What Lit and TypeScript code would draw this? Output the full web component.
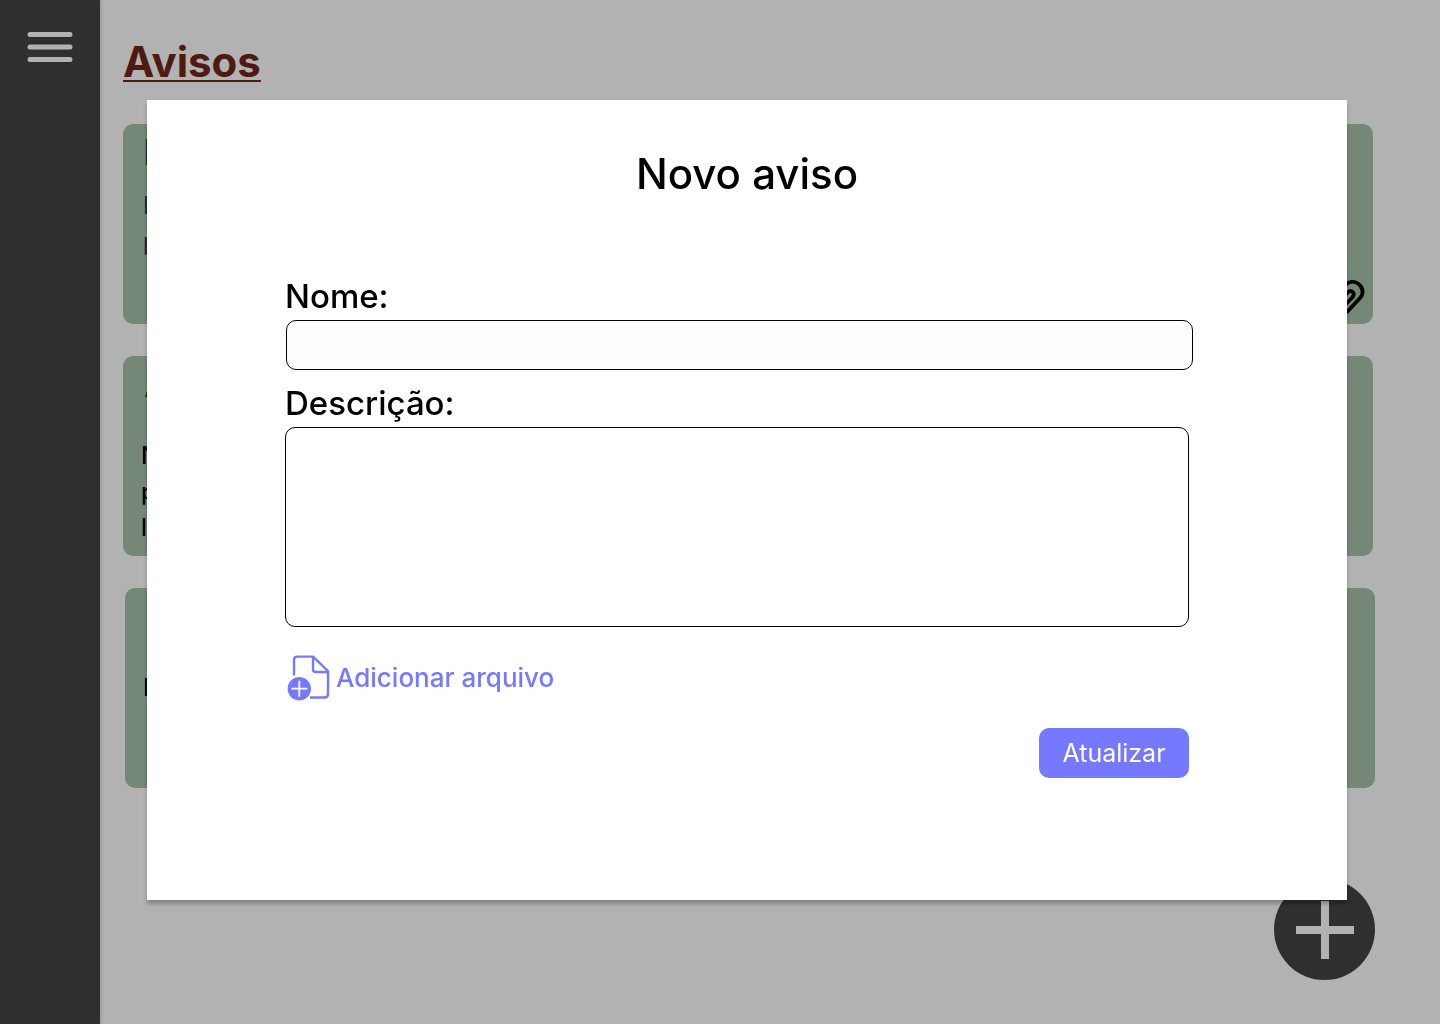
import { LitElement, html, css, svg } from "lit";
import { customElement } from "lit/decorators.js";
import { classMap } from "lit/directives/class-map.js";

interface Notice {
  title: string;
  lines: string[];
  variant: "tight" | "loose" | "plain";
  attachment: boolean;
}

const NOTICES: Notice[] = [
  { title: "N", lines: ["N", "p"], variant: "tight", attachment: true },
  { title: "A", lines: ["N", "p", "l"], variant: "loose", attachment: false },
  { title: "", lines: ["N"], variant: "plain", attachment: false },
];

const menuIcon = html`<svg width="46" height="30" viewBox="0 0 46 30" aria-hidden="true">
  ${svg`<path d="M3 2.5H43M3 15H43M3 27.5H43" fill="none" stroke="#fff" stroke-width="5" stroke-linecap="round" />`}
</svg>`;

const clipIcon = html`<svg class="clip" width="40" height="48" viewBox="0 0 40 48" aria-hidden="true">
  ${svg`<g fill="none" stroke="#000" stroke-width="3.800" stroke-linecap="round" stroke-linejoin="round">
    <path d="M3 23L16 8.500C19 5.500 24 5 28 7.500C33 11 34 17 30.500 21.500L17 36C14 39 9 39 6 36" />
    <path d="M10 25L17.500 16.500C19.500 14.500 22.300 14.500 23.300 16.700C24.200 18.500 23.500 20 22.500 21.200L13 31" />
  </g>`}
</svg>`;

const plusIcon = html`<svg width="58" height="58" viewBox="0 0 58 58" aria-hidden="true">
  ${svg`<path d="M0 29H58M29 0V58" fill="none" stroke="#fff" stroke-width="8" />`}
</svg>`;

const fileIcon = html`<svg width="44" height="48" viewBox="0 0 44 48" aria-hidden="true">
  ${svg`<g fill="none" stroke="#7579ff" stroke-width="2.4" stroke-linejoin="round">
    <path d="M8 21.500V6Q8 2.600 11.400 2.600H27L42 17V40Q42 43.500 38.500 43.500H24" />
    <path d="M27 2.600V15.500Q27 18 29.500 18H42" />
  </g>
  <circle cx="13.300" cy="34.700" r="11.700" fill="#7579ff" />
  <path d="M5.300 34.700H21.300M13.300 26.700V42.700" stroke="#fff" stroke-width="1.800" />`}
</svg>`;

@customElement("app-root")
export class AppRoot extends LitElement {
  static styles = css`
    :host {
      display: block;
      position: relative;
      font-family: Inter, "Open Sans", sans-serif;
      color: #000;
    }
    * {
      box-sizing: border-box;
    }
    button {
      font: inherit;
      border: 0;
      padding: 0;
      background: none;
      cursor: pointer;
    }
    svg {
      display: block;
    }
    .page {
      display: flex;
      min-height: 100vh;
      background: #fff;
    }
    .sidebar {
      flex: 0 0 100px;
      display: flex;
      flex-direction: column;
      align-items: center;
      padding-top: 32px;
      background: #444;
      box-shadow: 0 0 4px rgba(0, 0, 0, 0.25);
    }
    .main {
      flex: 1;
      min-width: 0;
      padding: 32px 67px 0 23px;
    }
    .heading {
      margin: 0 0 32px;
      font-size: 42px;
      line-height: 60px;
      font-weight: 700;
      color: #70271a;
      text-decoration: underline;
      text-decoration-thickness: 2px;
      text-underline-offset: 3px;
      text-decoration-skip-ink: none;
    }
    .list {
      display: flex;
      flex-direction: column;
      gap: 32px;
      will-change: transform;
    }
    .card {
      position: relative;
      height: 200px;
      padding: 4px 20px;
      border-radius: 10px;
      background: #a8c2ab;
      overflow: hidden;
    }
    .card.plain {
      margin: 0 -2px 0 2px;
      padding-left: 18px;
    }
    .title {
      margin: 0;
      font-size: 35px;
      line-height: 48px;
      font-weight: 500;
      color: #3c3c3c;
    }
    .body {
      margin: 12px 0 0;
      font-size: 24px;
      line-height: 36px;
      font-weight: 500;
    }
    .tight .body {
      color: #3c3c3c;
    }
    .card.loose {
      padding-left: 18px;
    }
    .loose .title {
      padding-left: 3px;
    }
    .loose .body {
      margin-top: 30px;
    }
    .plain .body {
      margin-top: 78px;
    }
    .line {
      display: block;
    }
    .clip {
      position: absolute;
      right: 3px;
      bottom: 0;
    }
    .fab {
      position: absolute;
      right: 65px;
      bottom: 44px;
      display: grid;
      place-items: center;
      width: 101px;
      height: 101px;
      border-radius: 50%;
      background: #444;
    }
    .overlay {
      position: absolute;
      inset: 0;
      padding: 100px 93px 124px 147px;
      background: rgba(0, 0, 0, 0.3);
    }
    .modal {
      padding: 44px 154px 122px 138px;
      background: #fff;
      box-shadow: 0 4px 4px rgba(0, 0, 0, 0.25);
    }
    .modal-title {
      margin: 0 0 66px 16px;
      font-size: 42px;
      line-height: 60px;
      font-weight: 500;
      text-align: center;
    }
    .form {
      display: flex;
      flex-direction: column;
    }
    .label {
      padding-top: 2px;
      font-size: 33px;
      line-height: 48px;
      font-weight: 500;
    }
    .field {
      border: 1px solid #000;
      border-radius: 10px;
      padding: 8px 16px;
      font: inherit;
      font-size: 24px;
      outline: none;
      resize: none;
    }
    .name {
      height: 50px;
      margin: 0 0 7px 1px;
      background: #fffcfd;
    }
    .description {
      height: 200px;
      margin-right: 4px;
      background: #fff;
    }
    .attach {
      align-self: flex-start;
      display: flex;
      align-items: center;
      gap: 6px;
      margin: 27px 0 26px 1px;
      font-size: 26px;
      line-height: 46px;
      font-weight: 500;
      color: #7579ff;
    }
    .submit {
      align-self: flex-end;
      width: 150px;
      height: 50px;
      margin-right: 4px;
      border-radius: 10px;
      background: #7579ff;
      color: #fff;
      font-size: 25px;
    }
  `;

  private renderNotice(notice: Notice) {
    return html`<article class=${classMap({ card: true, [notice.variant]: true })}>
      ${notice.title ? html`<h2 class="title">${notice.title}</h2>` : ""}
      <p class="body">${notice.lines.map((l) => html`<span class="line">${l}</span>`)}</p>
      ${notice.attachment ? clipIcon : ""}
    </article>`;
  }

  render() {
    return html`
      <div class="page">
        <nav class="sidebar">
          <button type="button" aria-label="Menu">${menuIcon}</button>
        </nav>
        <main class="main">
          <h1 class="heading">Avisos</h1>
          <div class="list">${NOTICES.map((n) => this.renderNotice(n))}</div>
        </main>
      </div>
      <button class="fab" type="button" aria-label="Novo aviso">${plusIcon}</button>
      <div class="overlay">
        <section class="modal" role="dialog" aria-modal="true" aria-labelledby="modal-title">
          <h2 class="modal-title" id="modal-title">Novo aviso</h2>
          <form class="form" @submit=${(e: Event) => e.preventDefault()}>
            <label class="label" for="name">Nome:</label>
            <input class="field name" id="name" type="text" />
            <label class="label" for="description">Descrição:</label>
            <textarea class="field description" id="description"></textarea>
            <button class="attach" type="button">${fileIcon}<span>Adicionar arquivo</span></button>
            <button class="submit" type="submit">Atualizar</button>
          </form>
        </section>
      </div>
    `;
  }
}
